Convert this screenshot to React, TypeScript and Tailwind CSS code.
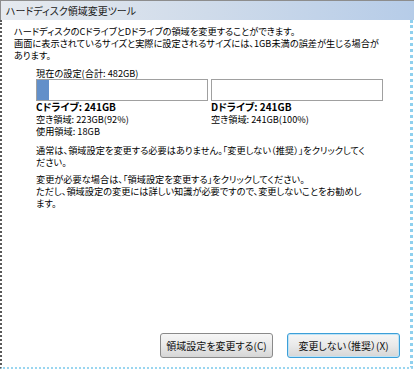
import React from "react"

const jp = "font-['Noto_Sans_CJK_JP','Noto_Sans',sans-serif]"

const Button = ({ label, primary }: { label: string; primary?: boolean }) => (
  <button
    className={
      "h-[25px] w-[113px] rounded-[3px] border bg-gradient-to-b from-[#f6f6f6] via-[#e9e9e9] to-[#d6d6d6] text-[10px] text-[#111] " +
      (primary ? "border-[#3c9fd8] shadow-[inset_0_0_0_1px_#bfe3f6]" : "border-[#8a8a8a]")
    }
  >
    {label}
  </button>
)

export default function App() {
  return (
    <div className={"w-[414px] h-[369px] bg-white flex flex-col overflow-hidden " + jp}>
      <div className="h-[20px] shrink-0 flex items-center pl-[5px] border-t border-l border-[#8d8d8d] bg-gradient-to-r from-[#e6eaef] via-[#cfdbea] to-[#b6cce8] text-[10px] text-[#1a1a1a] [font-feature-settings:'palt']">
        ハードディスク領域変更ツール
      </div>
      <div className="flex-1 flex flex-col border-l-2 border-dotted border-[#5a5a5a] border-r-[3px] border-r-solid border-r-[#8fd0ee] border-b-2 border-b-[#9ad6f0] mr-[1px] pl-[12px] pr-[10px] pt-[5px] text-[9.2px] leading-[12px] text-black [font-feature-settings:'palt'] whitespace-nowrap">
        <p>
          ハードディスクのCドライブとDドライブの領域を変更することができます。
          <br />
          画面に表示されているサイズと実際に設定されるサイズには、1GB未満の誤差が生じる場合が
          <br />
          あります。
        </p>

        <div className="pl-[22px] mt-[6px]">
          <p>現在の設定(合計: 482GB)</p>
          <div className="flex gap-[3px] w-[347px]">
            <div className="flex-1 h-[22px] border border-[#a0a0a0] bg-white">
              <div className="w-[12px] h-full bg-[#4f7fbd] bg-[radial-gradient(#7aa3d6_0.6px,transparent_0.8px)] bg-[length:2px_2px]" />
            </div>
            <div className="flex-1 h-[22px] border border-[#a0a0a0] bg-white" />
          </div>
          <div className="flex gap-[3px] w-[347px]">
            <div className="flex-1">
              <p className="font-bold text-[10px]">Cドライブ: 241GB</p>
              <p>空き領域: 223GB(92%)</p>
              <p>使用領域: 18GB</p>
            </div>
            <div className="flex-1">
              <p className="font-bold text-[10px]">Dドライブ: 241GB</p>
              <p>空き領域: 241GB(100%)</p>
            </div>
          </div>
        </div>

        <p className="pl-[22px] mt-[7px]">
          通常は、領域設定を変更する必要はありません。「変更しない（推奨）」をクリックしてく
          <br />
          ださい。
        </p>
        <p className="pl-[22px] mt-[5px]">
          変更が必要な場合は、「領域設定を変更する」をクリックしてください。
          <br />
          ただし、領域設定の変更には詳しい知識が必要ですので、変更しないことをお勧めし
          <br />
          ます。
        </p>

        <div className="mt-auto mb-[9px] flex justify-end gap-[14px]">
          <Button label="領域設定を変更する(C)" />
          <Button label="変更しない（推奨）(X)" primary />
        </div>
      </div>
    </div>
  )
}
